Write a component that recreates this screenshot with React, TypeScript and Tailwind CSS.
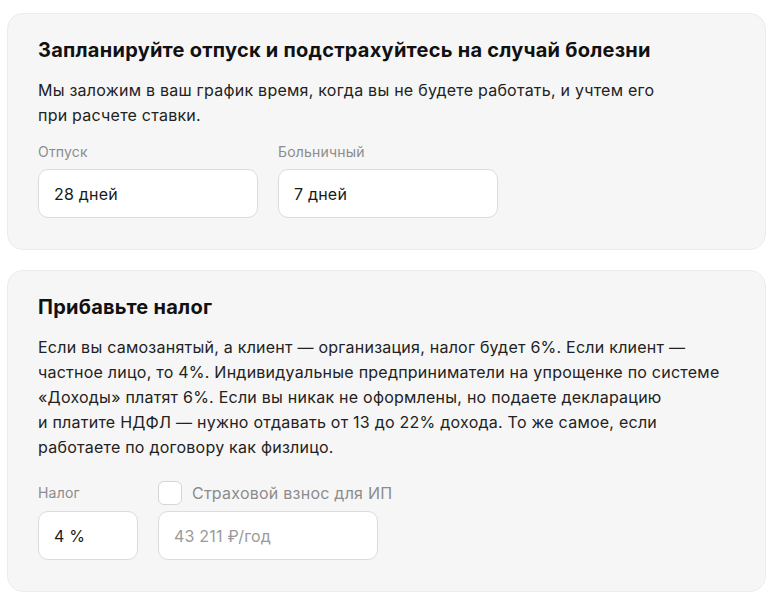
import { useState } from "react";

const font = { fontFamily: "Inter, 'Noto Sans', sans-serif" };

function Field({ value, width, muted }: { value: string; width: string; muted?: boolean }) {
  return (
    <div
      className={`${width} h-[49px] flex items-center px-[15px] bg-white border border-[#dcdcdc] rounded-[10px] text-base tracking-[0.2px] ${
        muted ? "text-[#9a9a9a]" : "text-[#1a1a1a]"
      }`}
    >
      {value}
    </div>
  );
}

function Card({ children }: { children: React.ReactNode }) {
  return (
    <section className="bg-[#f6f6f6] border border-[#ececec] rounded-2xl px-[30px] pt-[22px] pb-[31px]">
      {children}
    </section>
  );
}

export default function App() {
  const [insured, setInsured] = useState(false);

  return (
    <div className="min-h-screen bg-white pl-[7px] pt-[13px] w-[766px]" style={font}>
      <div className="flex flex-col gap-5">
        <Card>
          <h2 className="text-xl leading-7 font-bold tracking-[0.25px] text-[#111]">
            Запланируйте отпуск и подстрахуйтесь на случай болезни
          </h2>
          <p className="mt-[14px] text-base leading-[25px] tracking-[0.24px] text-[#222]">
            Мы заложим в ваш график время, когда вы не будете работать, и учтем его
            <br />
            при расчете ставки.
          </p>
          <div className="mt-[14px] flex gap-5">
            <div className="flex flex-col gap-[7px]">
              <span className="text-sm leading-5 tracking-[0.2px] text-[#8c8c8c]">Отпуск</span>
              <Field value="28 дней" width="w-[220px]" />
            </div>
            <div className="flex flex-col gap-[7px]">
              <span className="text-sm leading-5 tracking-[0.2px] text-[#8c8c8c]">Больничный</span>
              <Field value="7 дней" width="w-[220px]" />
            </div>
          </div>
        </Card>

        <Card>
          <h2 className="text-xl leading-7 font-bold tracking-[0.25px] text-[#111]">Прибавьте налог</h2>
          <p className="mt-[14px] text-base leading-[25px] tracking-[0.24px] text-[#222]">
            Если вы самозанятый, а клиент — организация, налог будет 6%. Если клиент —
            <br />
            частное лицо, то 4%. Индивидуальные предприниматели на упрощенке по системе
            <br />
            «Доходы» платят 6%. Если вы никак не оформлены, но подаете декларацию
            <br />
            и платите НДФЛ — нужно отдавать от 13 до 22% дохода. То же самое, если
            <br />
            работаете по договору как физлицо.
          </p>
          <div className="mt-[21px] flex gap-5">
            <div className="flex flex-col gap-[6px]">
              <span className="h-6 flex items-center text-sm tracking-[0.2px] text-[#8c8c8c]">Налог</span>
              <Field value="4 %" width="w-[100px]" />
            </div>
            <div className="flex flex-col gap-[6px]">
              <label className="h-6 flex items-center gap-[10px] cursor-pointer">
                <button
                  type="button"
                  onClick={() => setInsured(!insured)}
                  className="w-6 h-6 rounded-md bg-white border border-[#d6d6d6]"
                />
                <span className="text-base tracking-[0.24px] text-[#8c8c8c]">Страховой взнос для ИП</span>
              </label>
              <Field value="43 211 ₽/год" width="w-[220px]" muted />
            </div>
          </div>
        </Card>
      </div>
    </div>
  );
}
